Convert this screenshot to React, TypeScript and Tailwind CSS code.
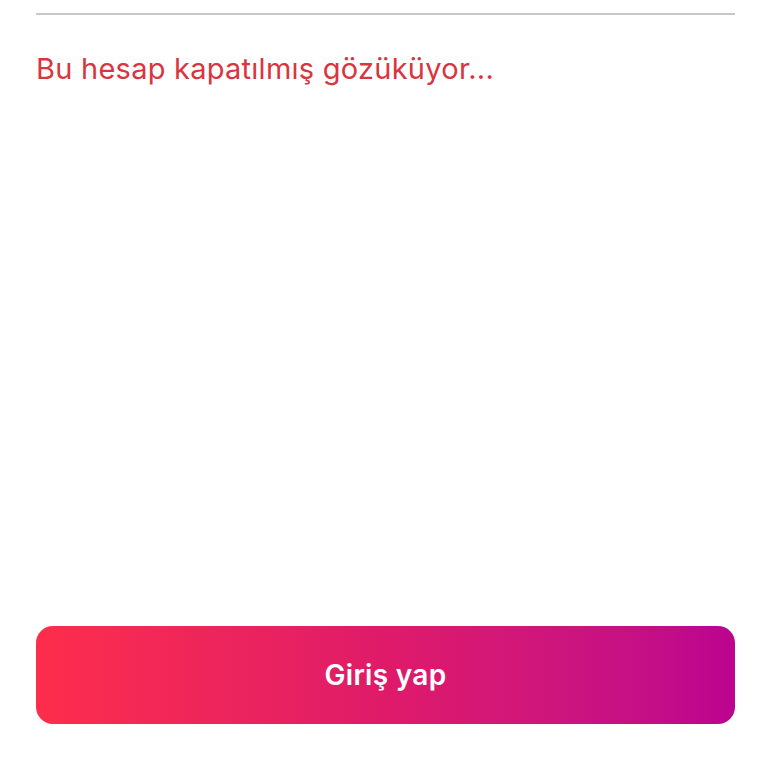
export default function App() {
  return (
    <div className="flex h-[768px] w-[768px] flex-col bg-white pl-9 pr-[33px] font-['Inter','Liberation_Sans',sans-serif]">
      <div className="mt-[13px] h-[2px] w-full bg-[#c8c8cc]" />
      <p className="mt-[36px] text-[29px] leading-[36px] tracking-[0.25px] text-[#d9353f]">
        Bu hesap kapatılmış gözüküyor...
      </p>
      <div className="flex-1" />
      <button className="mb-[44px] flex h-[98px] w-full items-center justify-center rounded-[17px] bg-gradient-to-r from-[#fd2d4a] via-[#df1a69] to-[#bc038f] text-[28px] font-semibold tracking-[0.3px] text-white">
        Giriş yap
      </button>
    </div>
  );
}
